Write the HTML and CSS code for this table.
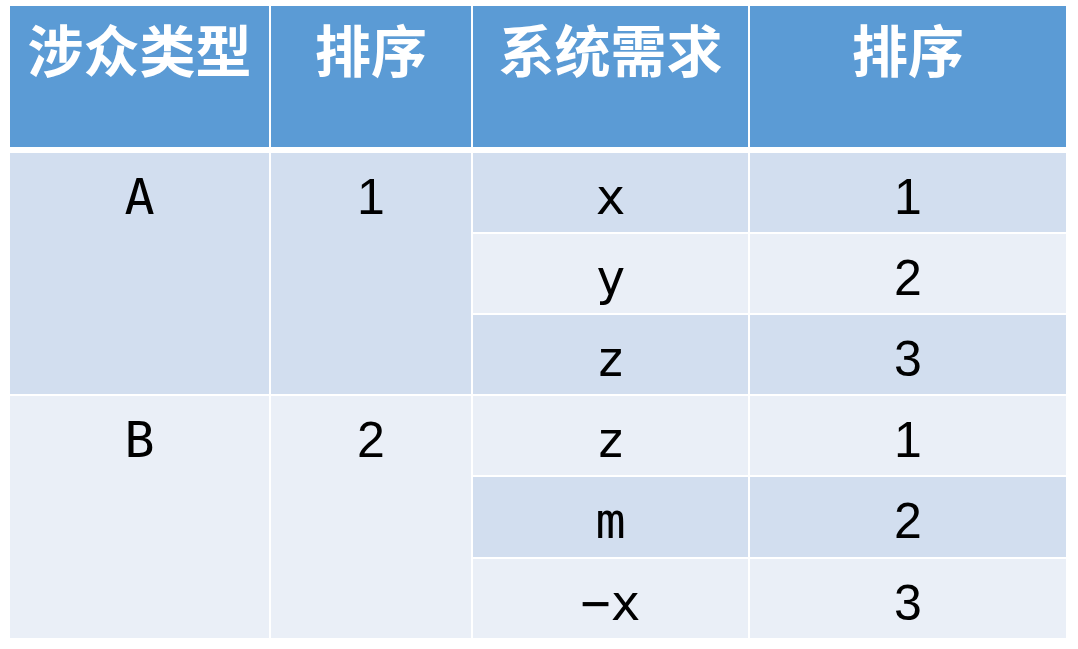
FILE: index.html
```html
<!DOCTYPE html>
<html lang="zh-CN">
<head>
<meta charset="utf-8">
<title>涉众类型与系统需求排序</title>
<link rel="stylesheet" href="styles.css">
</head>
<body>
<div class="table">
  <div class="grid head">
    <div class="hcell">涉众类型</div>
    <div class="hcell">排序</div>
    <div class="hcell">系统需求</div>
    <div class="hcell">排序</div>
  </div>
  <div class="grid body">
    <div class="cell mono dark span3 c1 r1">A</div>
    <div class="cell num dark span3 c2 r1">1</div>
    <div class="cell mono dark c3">x</div>
    <div class="cell num dark c4">1</div>
    <div class="cell mono light c3">y</div>
    <div class="cell num light c4">2</div>
    <div class="cell mono dark c3">z</div>
    <div class="cell num dark c4">3</div>
    <div class="cell mono light span3 c1 r4">B</div>
    <div class="cell num light span3 c2 r4">2</div>
    <div class="cell mono light c3">z</div>
    <div class="cell num light c4">1</div>
    <div class="cell mono dark c3">m</div>
    <div class="cell num dark c4">2</div>
    <div class="cell mono light c3">−x</div>
    <div class="cell num light c4">3</div>
  </div>
</div>
</body>
</html>
```

FILE: styles.css
```css
html, body {
  margin: 0;
  padding: 0;
  background: #ffffff;
}

.table {
  display: flex;
  flex-direction: column;
  gap: 6px;
  width: 1056px;
  margin: 6px 0 0 10px;
}

.grid {
  display: grid;
  grid-template-columns: 259px 200px 275px 316px;
  column-gap: 2px;
}

.head {
  grid-template-rows: 141px;
}

.body {
  grid-template-rows: 79px 79px 79px 79px 80px 79px;
  row-gap: 2px;
  grid-auto-flow: row dense;
}

.hcell {
  background: #5b9bd5;
  color: #ffffff;
  font-family: "Noto Sans CJK SC", "Noto Sans", sans-serif;
  font-weight: 700;
  font-size: 56px;
  line-height: 56px;
  padding-top: 14px;
  text-align: center;
}

.cell {
  color: #000000;
  font-size: 50px;
  line-height: 60px;
  padding-top: 14px;
  text-align: center;
  box-sizing: border-box;
}

.mono {
  font-family: "DejaVu Sans Mono", "Liberation Mono", monospace;
}

.num {
  font-family: "Liberation Sans", Arial, sans-serif;
}

.dark { background: #d2deef; }
.light { background: #eaeff7; }

.c1 { grid-column: 1; }
.c2 { grid-column: 2; }
.c3 { grid-column: 3; }
.c4 { grid-column: 4; }
.r1 { grid-row: 1 / span 3; }
.r4 { grid-row: 4 / span 3; }
.span3 { }
```
